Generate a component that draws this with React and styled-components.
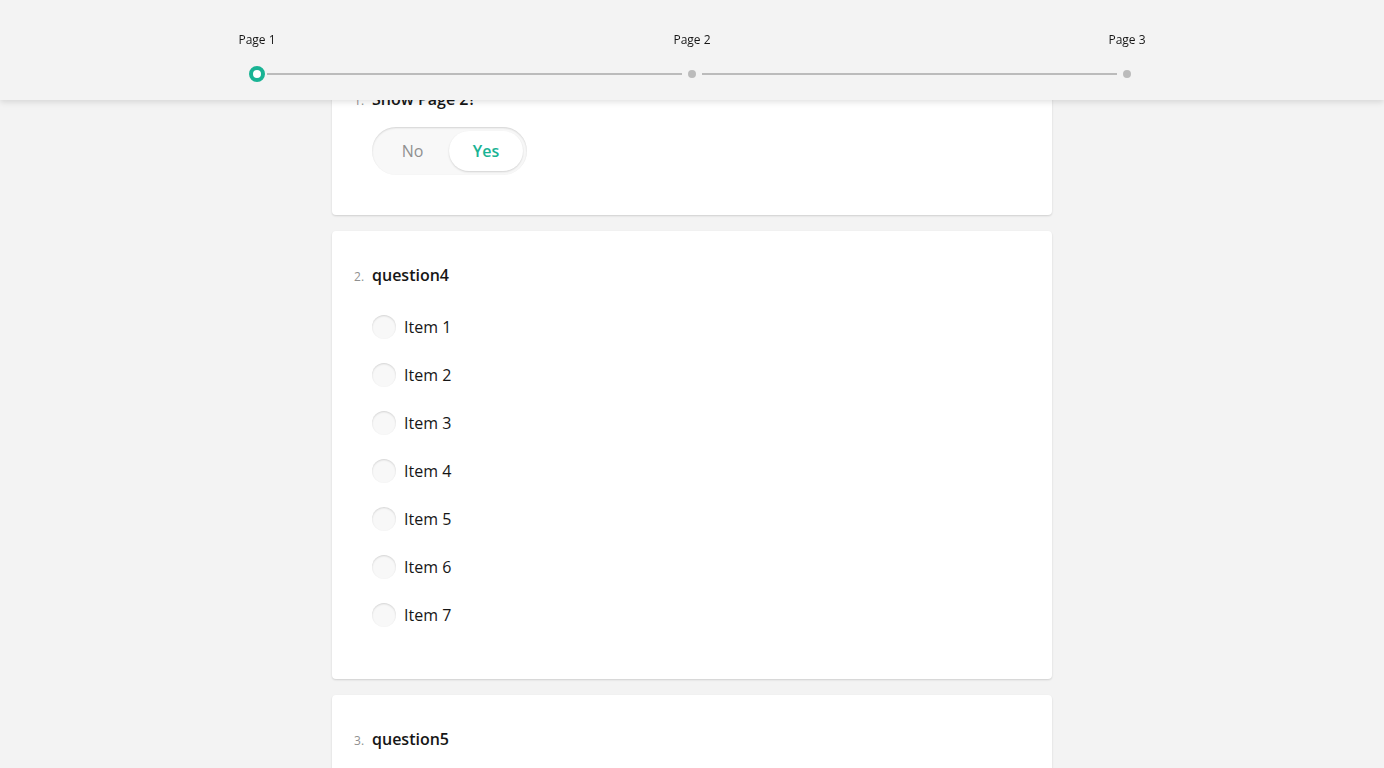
import styled, { createGlobalStyle } from "styled-components";

const GlobalStyle = createGlobalStyle`
  html, body {
    margin: 0;
    padding: 0;
    background: #f3f3f3;
    font-family: "Open Sans", "Noto Sans", sans-serif;
    color: #161616;
  }
  * { box-sizing: border-box; }
`;

const Header = styled.header`
  position: fixed;
  top: 0;
  left: 0;
  right: 0;
  height: 100px;
  background: #f3f3f3;
  box-shadow: 0 2px 6px rgba(0, 0, 0, 0.12);
  z-index: 10;
  padding-top: 32px;
`;

const Steps = styled.div`
  width: 886px;
  padding-right: 4px;
  margin: 0 auto;
  display: flex;
  align-items: flex-end;
`;

const Step = styled.div`
  flex: 0 0 auto;
  width: ${(p) => (p.$active ? "16px" : "8px")};
  display: flex;
  flex-direction: column;
  align-items: center;
  gap: 18px;
`;

const StepLabel = styled.span`
  font-size: 12px;
  line-height: 16px;
  white-space: nowrap;
  color: #161616;
`;

const Node = styled.span`
  display: block;
  flex: 0 0 auto;
  width: ${(p) => (p.$active ? "16px" : "8px")};
  height: ${(p) => (p.$active ? "16px" : "8px")};
  margin: ${(p) => (p.$active ? "0" : "4px 0")};
  border-radius: 50%;
  background: ${(p) => (p.$active ? "#fff" : "#bbbbbb")};
  border: ${(p) => (p.$active ? "4px solid #19b394" : "none")};
`;

const Connector = styled.span`
  flex: 1;
  height: 2px;
  background: #bbbbbb;
  margin: 0 ${(p) => p.$right || 6}px 7px ${(p) => p.$left || 6}px;
`;

const Page = styled.main`
  padding: 55px 0 40px;
  display: flex;
  flex-direction: column;
  align-items: center;
  gap: 16px;
`;

const Card = styled.section`
  width: 720px;
  background: #fff;
  border-radius: 4px;
  box-shadow: 0 1px 2px rgba(0, 0, 0, 0.15);
  padding: 32px 40px 40px;
`;

const TitleRow = styled.div`
  display: flex;
  align-items: baseline;
  margin-left: -18px;
  margin-bottom: 16px;
`;

const Num = styled.span`
  width: 18px;
  padding-right: 8px;
  text-align: right;
  font-size: 12px;
  color: #909090;
`;

const Title = styled.h5`
  margin: 0;
  font-size: 16px;
  line-height: 24px;
  font-weight: 600;
  color: #161616;
`;

const Toggle = styled.div`
  display: inline-flex;
  padding: 4px;
  height: 48px;
  border-radius: 24px;
  background: #f8f8f8;
  box-shadow: inset 0 1px 2px rgba(0, 0, 0, 0.15);
`;

const ToggleOption = styled.span`
  width: ${(p) => (p.$on ? "74px" : "73px")};
  height: 40px;
  display: flex;
  align-items: center;
  justify-content: center;
  border-radius: 20px;
  font-size: 16px;
  font-weight: ${(p) => (p.$on ? 600 : 400)};
  color: ${(p) => (p.$on ? "#19b394" : "#909090")};
  background: ${(p) => (p.$on ? "#fff" : "transparent")};
  box-shadow: ${(p) => (p.$on ? "0 1px 2px rgba(0, 0, 0, 0.15)" : "none")};
`;

const Choices = styled.div`
  display: flex;
  flex-direction: column;
`;

const Choice = styled.label`
  height: 48px;
  display: flex;
  align-items: center;
  gap: 8px;
  font-size: 16px;
  color: #161616;
`;

const Radio = styled.span`
  width: 24px;
  height: 24px;
  border-radius: 50%;
  background: #f8f8f8;
  box-shadow: inset 0 1px 2px rgba(0, 0, 0, 0.15);
`;

const items = ["Item 1", "Item 2", "Item 3", "Item 4", "Item 5", "Item 6", "Item 7"];

const Question = ({ num, title, children }) => (
  <Card>
    <TitleRow>
      <Num>{num}.</Num>
      <Title>{title}</Title>
    </TitleRow>
    {children}
  </Card>
);

const App = () => {
  return (
    <>
      <GlobalStyle />
      <Header>
        <Steps>
          <Step $active>
            <StepLabel>Page 1</StepLabel>
            <Node $active />
          </Step>
          <Connector $left={2} />
          <Step>
            <StepLabel>Page 2</StepLabel>
            <Node />
          </Step>
          <Connector />
          <Step>
            <StepLabel>Page 3</StepLabel>
            <Node />
          </Step>
        </Steps>
      </Header>
      <Page>
        <Question num={1} title="Show Page 2?">
          <Toggle>
            <ToggleOption>No</ToggleOption>
            <ToggleOption $on>Yes</ToggleOption>
          </Toggle>
        </Question>
        <Question num={2} title="question4">
          <Choices>
            {items.map((it) => (
              <Choice key={it}>
                <Radio />
                {it}
              </Choice>
            ))}
          </Choices>
        </Question>
        <Question num={3} title="question5" />
      </Page>
    </>
  );
};

export default App;
